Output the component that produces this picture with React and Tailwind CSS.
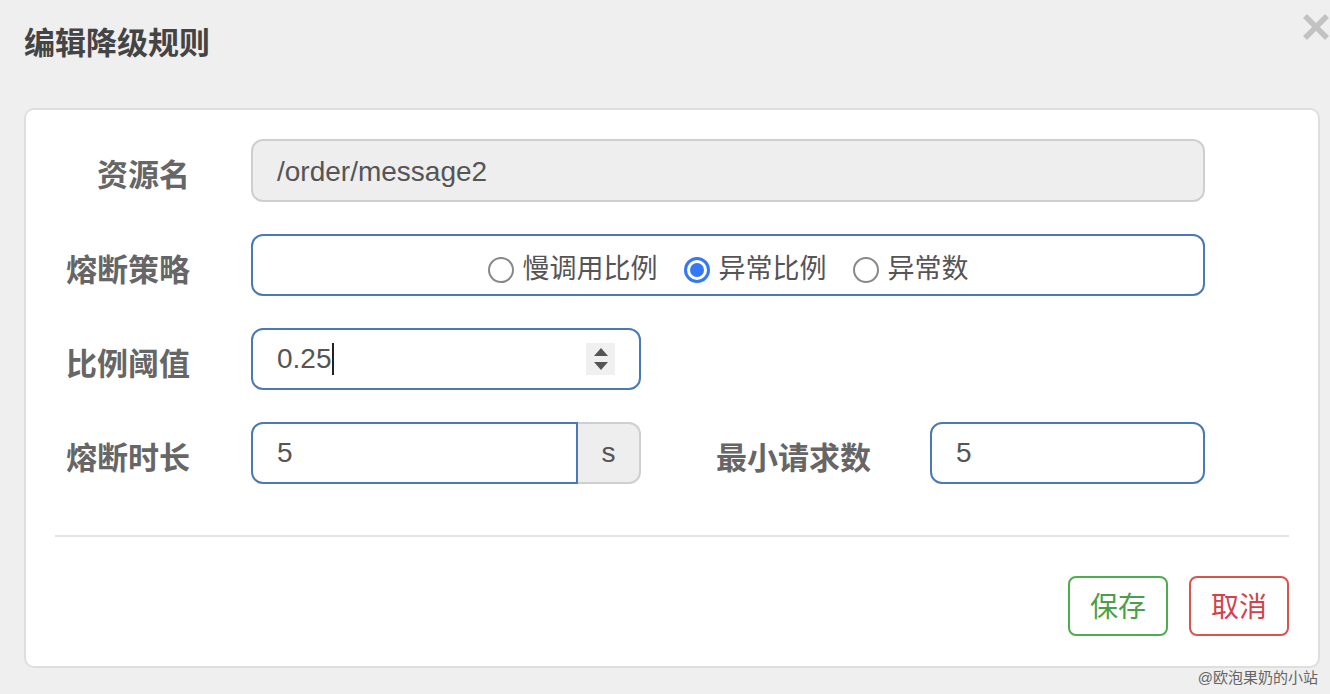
import React from 'react';

const font = { fontFamily: '"Liberation Sans", "Noto Sans CJK SC", sans-serif' };

const Label = ({ children, className = '' }) => (
  <div className={`shrink-0 text-right text-[31px] font-bold text-[#666] leading-none mt-[10px] ${className}`}>
    {children}
  </div>
);

const Radio = ({ checked, label }) => (
  <label className="flex items-center gap-[9px] text-[27px] text-[#555] leading-none">
    {checked ? (
      <span className="w-[26px] h-[26px] rounded-full border-[3px] border-[#3478f6] flex items-center justify-center">
        <span className="w-[14px] h-[14px] rounded-full bg-[#3478f6]" />
      </span>
    ) : (
      <span className="w-[26px] h-[26px] rounded-full border-2 border-[#888] bg-white" />
    )}
    <span>{label}</span>
  </label>
);

const App = () => {
  return (
    <div className="w-[1330px] h-[694px] bg-[#efefef] flex flex-col overflow-hidden" style={font}>
      {/* Header */}
      <div className="h-[108px] shrink-0 flex justify-between pl-[24px]">
        <h3 className="mt-[28px] text-[31px] font-bold text-[#444] leading-[32px]">编辑降级规则</h3>
        <svg width="28" height="28" viewBox="0 0 28 28" className="mt-[13px]">
          <path d="M3 3 L25 25 M25 3 L3 25" stroke="#c2c2c2" strokeWidth="5.5" strokeLinecap="butt" />
        </svg>
      </div>

      {/* Panel */}
      <div className="ml-[24px] mr-[10px] h-[560px] shrink-0 bg-white border-2 border-[#dedede] rounded-[10px] px-[29px] pt-[29px] flex flex-col">
        <div className="flex flex-col gap-[32px] pr-[84px]">
          {/* 资源名 */}
          <div className="flex items-center">
            <Label className="w-[135px]">资源名</Label>
            <div className="ml-[61px] flex-1 h-[63px] bg-[#eeeeee] border-2 border-[#cfcfcf] rounded-[12px] flex items-center px-[24px] pt-[3px] text-[28px] text-[#555]">
              /order/message2
            </div>
          </div>

          {/* 熔断策略 */}
          <div className="flex items-center">
            <Label className="w-[135px]">熔断策略</Label>
            <div className="ml-[61px] flex-1 h-[62px] border-2 border-[#4a7ab5] rounded-[12px] flex items-center justify-center gap-[26px] pt-[9px]">
              <Radio label="慢调用比例" />
              <Radio checked label="异常比例" />
              <Radio label="异常数" />
            </div>
          </div>

          {/* 比例阈值 */}
          <div className="flex items-center">
            <Label className="w-[135px]">比例阈值</Label>
            <div className="ml-[61px] w-[390px] h-[62px] border-2 border-[#4a7ab5] rounded-[12px] flex items-center pl-[24px] pr-[24px]">
              <span className="text-[28px] text-[#555] leading-none">0.25</span>
              <span className="w-[2px] h-[32px] bg-[#222]" />
              <div className="ml-auto w-[29px] h-[32px] bg-[#f0f0f0] flex flex-col items-center justify-center gap-[6px]">
                <span className="w-0 h-0 border-l-[7px] border-r-[7px] border-b-[8px] border-l-transparent border-r-transparent border-b-[#555]" />
                <span className="w-0 h-0 border-l-[7px] border-r-[7px] border-t-[8px] border-l-transparent border-r-transparent border-t-[#555]" />
              </div>
            </div>
          </div>

          {/* 熔断时长 / 最小请求数 */}
          <div className="flex items-center">
            <Label className="w-[135px]">熔断时长</Label>
            <div className="ml-[61px] w-[390px] h-[62px] flex">
              <div className="flex-1 border-2 border-[#4a7ab5] rounded-l-[12px] flex items-center px-[24px] text-[28px] text-[#555]">
                5
              </div>
              <div className="w-[63px] bg-[#eeeeee] border-2 border-l-0 border-[#cfcfcf] rounded-r-[12px] flex items-center justify-center text-[28px] text-[#555]">
                s
              </div>
            </div>
            <Label className="w-[230px]">最小请求数</Label>
            <div className="ml-[59px] flex-1 h-[62px] border-2 border-[#4a7ab5] rounded-[12px] flex items-center px-[24px] text-[28px] text-[#555]">
              5
            </div>
          </div>
        </div>

        <div className="mt-[51px] h-[2px] bg-[#e5e5e5]" />

        <div className="mt-[39px] flex justify-end gap-[21px]">
          <button className="w-[100px] h-[60px] border-2 border-[#4cae4c] rounded-[8px] text-[28px] text-[#4a9f4a] bg-white pt-[3px]">
            保存
          </button>
          <button className="w-[100px] h-[60px] border-2 border-[#d9534f] rounded-[8px] text-[28px] text-[#d2424a] bg-white pt-[3px]">
            取消
          </button>
        </div>
      </div>

      <div className="flex justify-end pr-[12px] text-[15px] text-[#666] leading-[20px]">
        @欧泡果奶的小站
      </div>
    </div>
  );
};

export default App;
